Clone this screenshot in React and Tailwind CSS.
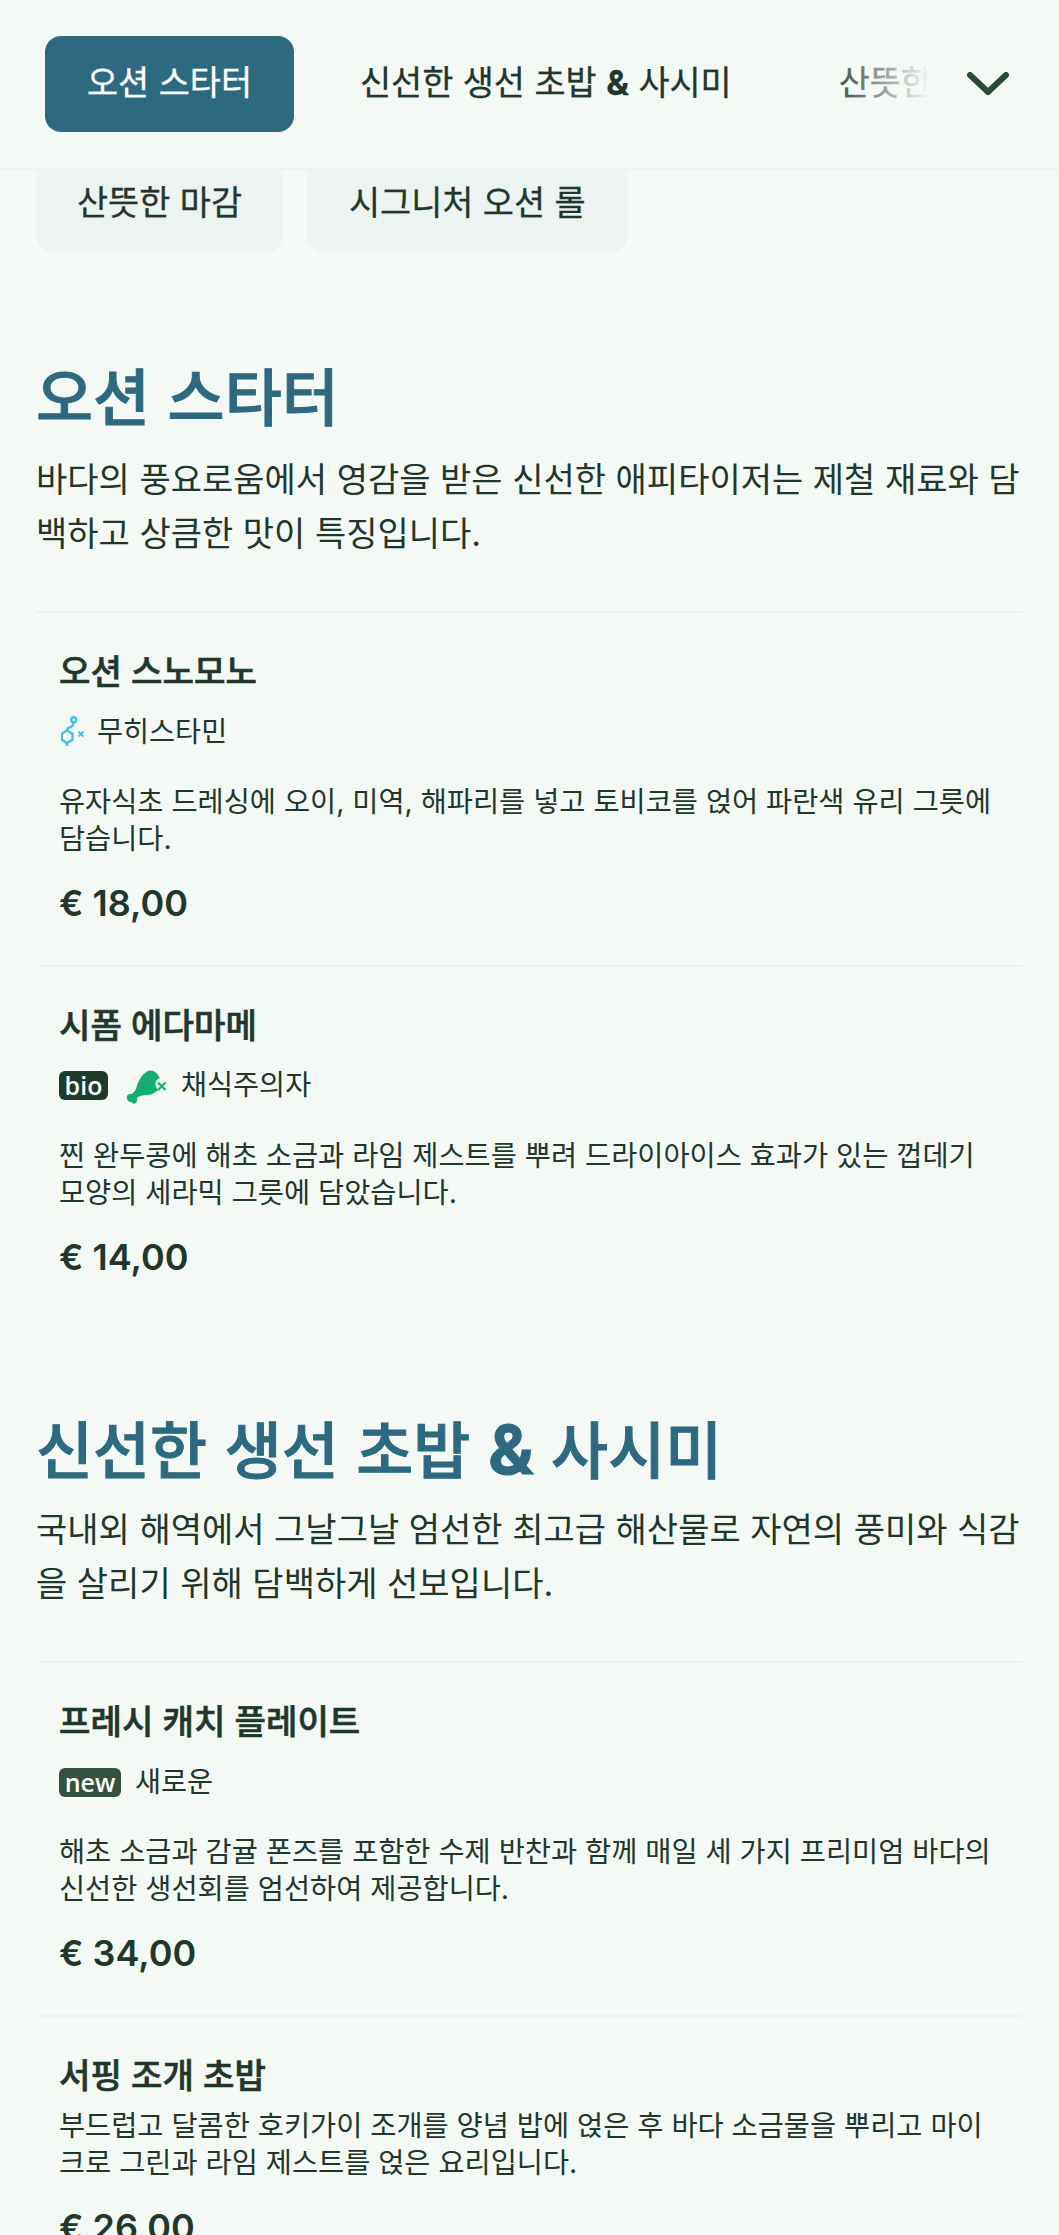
import { useState } from 'react'

const FONT = "font-['Inter','Noto_Sans_CJK_KR',sans-serif]"

// molecule with a small cross, drawn to match the "no histamine" tag
function HistamineIcon() {
  return (
    <svg viewBox="0 0 26 34" className="ml-[2px] w-[26px] h-[34px] text-[#45c3e6]" fill="none" stroke="currentColor" strokeWidth="2.4">
      <circle cx="12.7" cy="4.7" r="2.5" />
      <path d="M12.5 7.2 L11.5 11 L6.5 13.5 V15.5" />
      <path d="M6 15.5 L11.5 18.6 L11.5 24.8 L6 28 L0.9 24.8 L0.9 18.6 Z" />
      <path d="M6 28 V31" />
      <path d="M17.5 16.5 L22.5 21.5 M22.5 16.5 L17.5 21.5" strokeWidth="1.8" />
    </svg>
  )
}

function DrumstickIcon() {
  return (
    <svg viewBox="0 0 44 38" className="w-[44px] h-[38px] text-[#16ad70]" fill="currentColor">
      <path d="M3 31 C2 28 5 26.5 7.5 27 C9.5 26 11 24 12 22 C13.5 16 17 8 23 4.5 C28 1.5 33 5 36 11 C33 12 31 15 31.5 18 C32 20 33 22 34 23 C31 26 27 28 23 28 C19 28 15 29 13.5 30.5 C13 32 13.5 34 12 36 C10 37.5 8 36.5 7.5 35 C5 35.5 3 33.5 3 31 Z" />
      <path d="M34 15.5 L41.5 23 M41.5 15.5 L34 23" fill="none" stroke="currentColor" strokeWidth="2.2" />
    </svg>
  )
}

function Badge({ children, dark }) {
  return (
    <span className={`inline-flex items-center justify-center h-[29px] rounded-[6px] text-white text-[25px] font-semibold font-['Open_Sans',sans-serif] leading-none ${dark ? 'w-[49px] bg-[#1d3a2a]' : 'w-[62px] bg-[#34513f]'}`}>
      {children}
    </span>
  )
}

function Item({ title, tags, desc, price }) {
  return (
    <div className="border-t-2 border-[#edf2ee] pl-[23px] pr-6 pt-[37px] pb-[39.5px]">
      <h3 className="h-[44px] leading-[44px] text-[34.2px] font-medium [-webkit-text-stroke:0.6px] mb-[9px]">{title}</h3>
      {tags && <div className="h-[58px] flex items-center mb-[22px] text-[28.3px]">{tags}</div>}
      <p className="text-[28.4px] leading-[37px] mb-[24px]">{desc}</p>
      <div className="h-[44px] leading-[44px] text-[36px] font-semibold">{price}</div>
    </div>
  )
}

function Section({ title, intro, children }) {
  return (
    <section>
      <h2 className="h-[72px] leading-[72px] text-[62px] font-medium [-webkit-text-stroke:1px] text-[#2d6a80] mb-[18px] [word-spacing:1px]">{title}</h2>
      <p className="text-[34px] leading-[54px] mb-[50px]">{intro}</p>
      {children}
    </section>
  )
}

export default function App() {
  const [open] = useState(false)

  return (
    <div className={`w-[1059px] h-[2235px] overflow-hidden bg-[#f4f9f5] text-[#22372b] ${FONT}`}>
      <header className="h-[170px] border-b-2 border-[#edf2ee] flex items-start pt-9 pl-[45px]">
        <div className="relative w-[890px] overflow-hidden flex gap-[25px] text-[33.8px] [-webkit-text-stroke:0.3px] whitespace-nowrap">
          <button className="h-24 px-[42px] pb-[2px] rounded-2xl bg-[#2d6a80] text-white shrink-0">오션 스타터</button>
          <button className="h-24 px-[41px] pb-[2px] shrink-0">신선한 생선 초밥 <span className="font-bold">&amp;</span> 사시미</button>
          <button className="h-24 px-[41px] pb-[2px] shrink-0">산뜻한 마감</button>
          <div className="absolute right-0 top-0 h-24 w-[100px] bg-gradient-to-r from-[#f4f9f5]/10 to-[#f4f9f5] to-[95%]" />
        </div>
        <svg viewBox="0 0 42 24" className={`w-[42px] h-6 mt-[36px] ml-[32px] text-[#2c4a3a] ${open ? 'rotate-180' : ''}`} fill="none" stroke="currentColor" strokeWidth="6" strokeLinecap="round" strokeLinejoin="round">
          <path d="M3 3 L21 20 L39 3" />
        </svg>
      </header>

      <div className="h-[82px] flex items-end gap-6 px-9 text-[33.8px] [-webkit-text-stroke:0.3px] overflow-hidden">
        <span className="h-24 shrink-0 px-[41px] pb-[2px] flex items-center rounded-2xl bg-[#edf3f0]">산뜻한 마감</span>
        <span className="h-24 shrink-0 px-[42px] pb-[2px] flex items-center rounded-2xl bg-[#edf3f0]">시그니처 오션 롤</span>
      </div>

      <main className="px-9 pt-[111px] flex flex-col gap-[95px]">
        <Section title="오션 스타터" intro="바다의 풍요로움에서 영감을 받은 신선한 애피타이저는 제철 재료와 담백하고 상큼한 맛이 특징입니다.">
          <Item
            title="오션 스노모노"
            tags={<><HistamineIcon /><span className="ml-[10px]">무히스타민</span></>}
            desc="유자식초 드레싱에 오이, 미역, 해파리를 넣고 토비코를 얹어 파란색 유리 그릇에 담습니다."
            price="€ 18,00"
          />
          <Item
            title="시폼 에다마메"
            tags={<><Badge dark>bio</Badge><span className="ml-[16px] flex"><DrumstickIcon /></span><span className="ml-[13px]">채식주의자</span></>}
            desc="찐 완두콩에 해초 소금과 라임 제스트를 뿌려 드라이아이스 효과가 있는 껍데기 모양의 세라믹 그릇에 담았습니다."
            price="€ 14,00"
          />
        </Section>
        <Section
          title={<>신선한 생선 초밥 <span className="font-bold text-[68px]">&amp;</span> 사시미</>}
          intro="국내외 해역에서 그날그날 엄선한 최고급 해산물로 자연의 풍미와 식감을 살리기 위해 담백하게 선보입니다."
        >
          <Item
            title="프레시 캐치 플레이트"
            tags={<><Badge>new</Badge><span className="ml-[14px]">새로운</span></>}
            desc="해초 소금과 감귤 폰즈를 포함한 수제 반찬과 함께 매일 세 가지 프리미엄 바다의 신선한 생선회를 엄선하여 제공합니다."
            price="€ 34,00"
          />
          <Item
            title="서핑 조개 초밥"
            desc="부드럽고 달콤한 호키가이 조개를 양념 밥에 얹은 후 바다 소금물을 뿌리고 마이크로 그린과 라임 제스트를 얹은 요리입니다."
            price="€ 26,00"
          />
        </Section>
      </main>
    </div>
  )
}
